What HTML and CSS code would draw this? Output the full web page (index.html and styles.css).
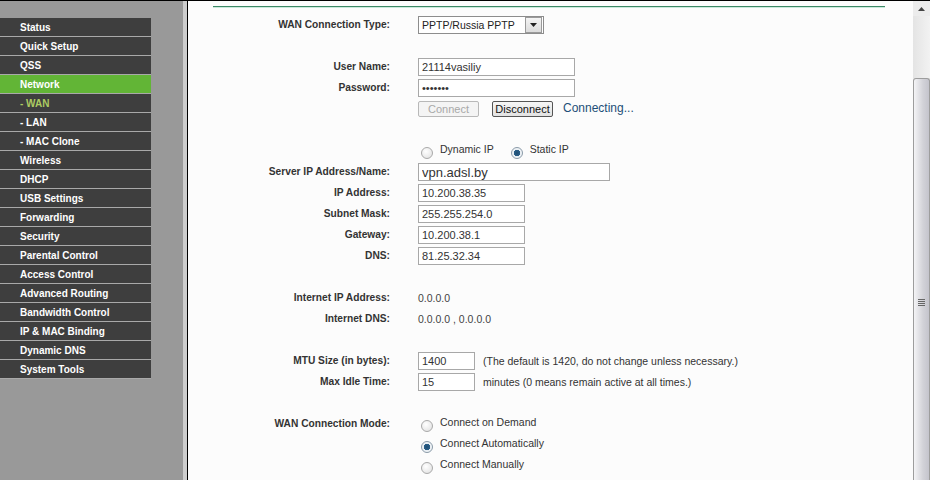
FILE: index.html
```html
<!DOCTYPE html>
<html lang="en">
<head>
    <meta charset="UTF-8">
    <meta name="viewport" content="width=device-width, initial-scale=1.0">
    <title>WAN</title>
    <link rel="stylesheet" href="styles.css">
</head>
<body>
    <div class="page">
        <div class="sidebar">
            <ul class="menu">
                <li>Status</li>
                <li>Quick Setup</li>
                <li>QSS</li>
                <li class="active">Network</li>
                <li class="sub current">- WAN</li>
                <li class="sub">- LAN</li>
                <li class="sub">- MAC Clone</li>
                <li>Wireless</li>
                <li>DHCP</li>
                <li>USB Settings</li>
                <li>Forwarding</li>
                <li>Security</li>
                <li>Parental Control</li>
                <li>Access Control</li>
                <li>Advanced Routing</li>
                <li>Bandwidth Control</li>
                <li>IP &amp; MAC Binding</li>
                <li>Dynamic DNS</li>
                <li>System Tools</li>
            </ul>
        </div>

        <div class="main">
            <div class="content">
                <div class="rule"></div>
                <div class="form">
                    <div class="row">
                        <label>WAN Connection Type:</label>
                        <div class="select">
                            <span>PPTP/Russia PPTP</span>
                            <span class="select-btn">
                                <svg width="7" height="4" viewBox="0 0 7 4"><path d="M0 0h7L3.5 4z" fill="#222"/></svg>
                            </span>
                        </div>
                    </div>
                    <div class="row"></div>
                    <div class="row">
                        <label>User Name:</label>
                        <input type="text" class="field wide" value="21114vasiliy">
                    </div>
                    <div class="row">
                        <label>Password:</label>
                        <input type="password" class="field wide" value="1234567">
                    </div>
                    <div class="row">
                        <label></label>
                        <button class="btn" disabled>Connect</button>
                        <button class="btn active-btn">Disconnect</button>
                        <span class="status">Connecting...</span>
                    </div>
                    <div class="row"></div>
                    <div class="row">
                        <label></label>
                        <span class="radio"></span><span class="opt">Dynamic IP</span>
                        <span class="radio checked gap"></span><span class="opt">Static IP</span>
                    </div>
                    <div class="row">
                        <label>Server IP Address/Name:</label>
                        <input type="text" class="field server" value="vpn.adsl.by">
                    </div>
                    <div class="row">
                        <label>IP Address:</label>
                        <input type="text" class="field ip" value="10.200.38.35">
                    </div>
                    <div class="row">
                        <label>Subnet Mask:</label>
                        <input type="text" class="field ip" value="255.255.254.0">
                    </div>
                    <div class="row">
                        <label>Gateway:</label>
                        <input type="text" class="field ip" value="10.200.38.1">
                    </div>
                    <div class="row">
                        <label>DNS:</label>
                        <input type="text" class="field ip" value="81.25.32.34">
                    </div>
                    <div class="row"></div>
                    <div class="row">
                        <label>Internet IP Address:</label>
                        <span class="value">0.0.0.0</span>
                    </div>
                    <div class="row">
                        <label>Internet DNS:</label>
                        <span class="value">0.0.0.0 , 0.0.0.0</span>
                    </div>
                    <div class="row"></div>
                    <div class="row">
                        <label>MTU Size (in bytes):</label>
                        <input type="text" class="field small" value="1400">
                        <span class="note">(The default is 1420, do not change unless necessary.)</span>
                    </div>
                    <div class="row">
                        <label>Max Idle Time:</label>
                        <input type="text" class="field small" value="15">
                        <span class="note">minutes (0 means remain active at all times.)</span>
                    </div>
                    <div class="row"></div>
                    <div class="row">
                        <label>WAN Connection Mode:</label>
                        <span class="radio"></span><span class="opt">Connect on Demand</span>
                    </div>
                    <div class="row">
                        <label></label>
                        <span class="radio checked"></span><span class="opt">Connect Automatically</span>
                    </div>
                    <div class="row">
                        <label></label>
                        <span class="radio"></span><span class="opt">Connect Manually</span>
                    </div>
                </div>
            </div>

            <div class="scrollbar">
                <div class="arrow">
                    <svg width="7" height="4" viewBox="0 0 7 4"><path d="M0 4h7L3.5 0z" fill="#444"/></svg>
                </div>
                <div class="track"></div>
                <div class="thumb">
                    <div class="grip"></div>
                </div>
            </div>
        </div>
    </div>
</body>
</html>
```

FILE: styles.css
```css
body {
    margin: 0;
    height: 480px;
    overflow: hidden;
    border-top: 1px solid #000;
    box-sizing: border-box;
    font-family: "Liberation Sans", Arial, sans-serif;
    color: #333;
}
.page {
    display: flex;
    height: 479px;
}

/* left menu */
.sidebar {
    width: 183px;
    background-color: #999;
    border-right: 4px solid #cdcdcd;
    padding-top: 17px;
}
.menu {
    list-style: none;
    margin: 0;
    padding: 0;
}
.menu li {
    width: 131px;
    height: 18px;
    line-height: 19px;
    padding-left: 20px;
    background-color: #3e3e3e;
    border-bottom: 1px solid #a9a9a9;
    color: #fff;
    font-size: 10px;
    font-weight: bold;
}
.menu li.active {
    background-color: #62b536;
}
.menu li.current {
    color: #adcb62;
}

/* main area */
.main {
    flex: 1;
    display: flex;
    border-left: 1px solid #000;
    background-color: #fcfcfc;
}
.content {
    flex: 1;
    padding: 5px 28px 0 25px;
}
.rule {
    border-top: 1px solid #3d8866;
    border-bottom: 1px solid #c9eadb;
}
.form {
    margin-top: 6px;
}
.row {
    display: flex;
    align-items: center;
    height: 21px;
}
.row label {
    width: 177px;
    margin-right: 28px;
    text-align: right;
    font-size: 10.2px;
    font-weight: bold;
    color: #333;
}

.field {
    box-sizing: border-box;
    height: 18px;
    border: 1px solid #a8a8a8;
    background: #fff;
    padding: 0 3px;
    font-family: "Liberation Sans", Arial, sans-serif;
    font-size: 11px;
    color: #333;
}
.wide {
    width: 157px;
}
.server {
    width: 192px;
    font-size: 13px;
    padding-top: 1px;
}
.ip {
    width: 107px;
}
.small {
    width: 57px;
}

.select {
    box-sizing: border-box;
    width: 126px;
    height: 18px;
    border: 1px solid #8d8d8d;
    background: #fff;
    display: flex;
    align-items: center;
    justify-content: space-between;
    padding-left: 3px;
    font-size: 10.5px;
    color: #222;
}
.select-btn {
    width: 15px;
    height: 14px;
    margin-right: 1px;
    border: 1px solid #9a9a9a;
    background: linear-gradient(#f4f4f4, #dcdcdc);
    display: flex;
    align-items: center;
    justify-content: center;
}

.btn {
    box-sizing: border-box;
    width: 61px;
    height: 16px;
    padding: 0;
    margin-right: 13px;
    border: 1px solid #b8b8b8;
    border-radius: 2px;
    background: #f4f4f4;
    color: #a8a8a8;
    font-family: "Liberation Sans", Arial, sans-serif;
    font-size: 11px;
}
.active-btn {
    margin-right: 10px;
    border-color: #555;
    background: linear-gradient(#f6f6f6, #e2e2e2);
    color: #111;
}
.status {
    font-size: 12px;
    color: #1d4f78;
    margin-top: -2px;
}

.radio {
    box-sizing: border-box;
    width: 12px;
    height: 12px;
    margin: 5px 7px 0 3px;
    border-radius: 50%;
    border: 1px solid #a9a9a9;
    background: radial-gradient(circle at 40% 35%, #fff, #dedede);
}
.radio.checked {
    border-color: #8a9aa8;
    background: radial-gradient(circle, #1e4d72 0, #2a5f88 3px, #e8eef3 3.5px, #fff);
}
.radio.gap {
    margin-left: 17px;
}
.opt {
    font-size: 10.5px;
    color: #333;
    margin-top: -4px;
}
.value {
    font-size: 10.5px;
    color: #444;
}
.note {
    margin-left: 8px;
    font-size: 10.5px;
    color: #333;
}

/* scrollbar */
.scrollbar {
    width: 17px;
    display: flex;
    flex-direction: column;
    background: #ececec;
}
.arrow {
    height: 15px;
    display: flex;
    align-items: center;
    justify-content: center;
}
.track {
    height: 62px;
    background: linear-gradient(90deg, #e4e4e4, #f2f2f2);
}
.thumb {
    flex: 1;
    border: 1px solid #9d9d9d;
    border-bottom: none;
    border-radius: 3px 3px 0 0;
    background: linear-gradient(90deg, #f4f4f6, #d2d2d8 60%, #c4c4cc);
    padding-top: 220px;
}
.grip {
    width: 7px;
    height: 7px;
    margin: 0 auto;
    background: repeating-linear-gradient(#666 0, #666 1px, transparent 1px, transparent 2px);
}
```
